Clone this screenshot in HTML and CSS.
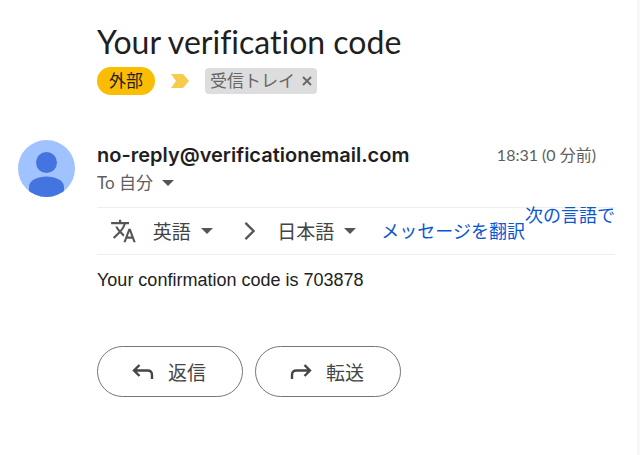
FILE: index.html
```html
<!DOCTYPE html>
<html lang="ja">

<head>
  <meta charset="UTF-8">
  <meta name="viewport" content="width=device-width, initial-scale=1.0">
  <title>Your verification code</title>
  <link rel="stylesheet" href="styles.css">
</head>

<body>
  <main class="mail">
    <header class="subject">
      <h1 class="subject-title">Your verification code</h1>
      <div class="labels">
        <span class="external">外部</span>
        <svg class="important" width="18" height="14" viewBox="0 0 18 14" aria-hidden="true">
          <path d="M0 0h12l6 7-6 7H0l5-7z" fill="#f7cb4d" />
        </svg>
        <span class="inbox">受信トレイ
          <button class="inbox-remove" type="button" aria-label="ラベルを削除">
            <svg width="10" height="10" viewBox="0 0 10 10">
              <path d="M1 1l8 8M9 1l-8 8" stroke="#666" stroke-width="1.800" />
            </svg>
          </button>
        </span>
      </div>
    </header>

    <article class="message">
      <svg class="avatar" viewBox="0 0 57 57" aria-hidden="true">
        <clipPath id="round">
          <circle cx="28.5" cy="28.5" r="28.5" />
        </clipPath>
        <g clip-path="url(#round)">
          <path d="M0 0h57v57H0z" fill="#a0c3ff" />
          <circle cx="28.5" cy="22.5" r="10.5" fill="#4374e0" />
          <path d="M11 57V47c0-7 9-10.500 17.500-10.500S46 40 46 47v10z" fill="#4374e0" />
        </g>
      </svg>

      <div class="message-main">
        <div class="sender-row">
          <span class="sender">no-reply@verificationemail.com</span>
          <time class="time">18:31 (0 分前)</time>
        </div>
        <button class="recipient" type="button">To 自分
          <svg class="caret" width="12" height="6" viewBox="0 0 12 6"><path d="M0 0h12L6 6z" /></svg>
        </button>

        <div class="translate">
          <svg class="translate-icon" width="28" height="28" viewBox="0 0 24 24" aria-hidden="true">
            <path d="M12.870 15.070l-2.540-2.510.03-.03A17.520 17.520 0 0 0 14.070 6H17V4h-7V2H8v2H1v2h11.170C11.500 7.920 10.440 9.750 9 11.350 8.070 10.320 7.300 9.190 6.690 8h-2c.73 1.630 1.730 3.170 2.980 4.560l-5.090 5.020L4 19l5-5 3.110 3.110.76-2.040zM18.500 10h-2L12 22h2l1.120-3h4.750L21 22h2l-4.500-12zm-2.620 7l1.620-4.330L19.120 17h-3.240z" />
          </svg>
          <label class="language">
            <select class="language-select" aria-label="翻訳元の言語">
              <option>英語</option>
            </select>
            <svg class="caret" width="12" height="6" viewBox="0 0 12 6"><path d="M0 0h12L6 6z" /></svg>
          </label>
          <svg class="chevron" width="12" height="20" viewBox="0 0 12 20" aria-hidden="true">
            <path d="M1.500 1.500l8.500 8.500-8.500 8.500" fill="none" stroke="#555" stroke-width="2.400" />
          </svg>
          <label class="language">
            <select class="language-select" aria-label="翻訳先の言語">
              <option>日本語</option>
            </select>
            <svg class="caret" width="12" height="6" viewBox="0 0 12 6"><path d="M0 0h12L6 6z" /></svg>
          </label>
          <a class="translate-link" href="#">
            <span>メッセージを翻訳</span>
            <span class="raised">次の言語で</span>
          </a>
        </div>

        <p class="body-text">Your confirmation code is 703878</p>

        <div class="actions">
          <button class="action" type="button">
            <svg width="22" height="18" viewBox="0 0 22 18" aria-hidden="true">
              <path d="M7.500 2L2 7.500 7.500 13M2 7.500h13.500q4.500 0 4.500 4.500v4" />
            </svg>
            返信
          </button>
          <button class="action" type="button">
            <svg width="22" height="18" viewBox="0 0 22 18" aria-hidden="true">
              <path d="M14.500 2L20 7.500 14.500 13M20 7.500H6.500Q2 7.500 2 12v4" />
            </svg>
            転送
          </button>
        </div>
      </div>
    </article>
  </main>
</body>

</html>
```

FILE: styles.css
```css
* {
  box-sizing: border-box;
}

html,
body {
  min-height: 100vh;
}

body {
  margin: 0;
  border-right: 3px solid #f6f7fc;
  background: #fff;
  color: #1f1f1f;
  font-family: Lato, "Noto Sans CJK JP", sans-serif;
  font-variant-ligatures: none;
}

button,
select {
  margin: 0;
  padding: 0;
  border: 0;
  background: none;
  color: inherit;
  font: inherit;
  cursor: pointer;
}

.subject {
  padding: 22px 22px 0 97px;
}

.subject-title {
  margin: 0;
  font-size: 32px;
  font-weight: 400;
  line-height: 40px;
}

.labels {
  display: flex;
  align-items: center;
  margin-top: 5px;
  font-size: 17px;
}

.external {
  padding: 0 12px;
  border-radius: 14px;
  background: #fbbc04;
  line-height: 28px;
}

.important {
  margin: 0 16px;
}

.inbox {
  display: flex;
  align-items: center;
  gap: 7px;
  padding: 0 5px;
  border-radius: 4px;
  background: #ddd;
  color: #666;
  line-height: 26px;
}

.inbox-remove {
  display: flex;
}

.message {
  display: grid;
  grid-template-columns: 57px minmax(0, 1fr);
  gap: 22px;
  padding: 45px 22px 0 18px;
}

.avatar {
  width: 57px;
  height: 57px;
}

.sender-row {
  display: flex;
  align-items: center;
  justify-content: space-between;
  padding-right: 19px;
  line-height: 30px;
}

.sender {
  font-family: Inter, sans-serif;
  font-size: 20px;
  font-weight: 600;
}

.time {
  color: #5e5e5e;
  font-size: 16px;
}

.recipient {
  display: flex;
  align-items: center;
  gap: 9px;
  color: #5e5e5e;
  font-size: 17px;
  line-height: 26px;
}

.caret {
  fill: #555;
}

.translate {
  display: flex;
  align-items: center;
  height: 48px;
  margin-top: 11px;
  border-top: 1px solid #eee;
  border-bottom: 1px solid #eee;
  color: #444;
  font-size: 19px;
}

.translate-icon {
  margin: 0 16px 0 13px;
  fill: #555;
}

.language {
  display: flex;
  align-items: center;
  gap: 9px;
}

.language-select {
  appearance: none;
}

.chevron {
  margin: 0 22px 0 31px;
}

.translate-link {
  display: flex;
  align-items: center;
  align-self: stretch;
  margin-left: 25px;
  color: #0b57d0;
  font-size: 18px;
  line-height: 15px;
  text-decoration: none;
  white-space: nowrap;
}

.raised {
  align-self: flex-start;
}

.body-text {
  margin: 14px 0 0;
  color: #222;
  font-family: "Liberation Sans", Arial, sans-serif;
  font-size: 18px;
  line-height: 22px;
}

.actions {
  display: flex;
  gap: 12px;
  padding: 55px 0 24px;
}

.action {
  display: flex;
  align-items: center;
  gap: 14px;
  height: 51px;
  padding: 0 36px 0 34px;
  border: 1px solid #747775;
  border-radius: 26px;
  color: #444746;
  font-size: 19px;
}

.action path {
  fill: none;
  stroke: #444746;
  stroke-width: 2.4;
}
```
